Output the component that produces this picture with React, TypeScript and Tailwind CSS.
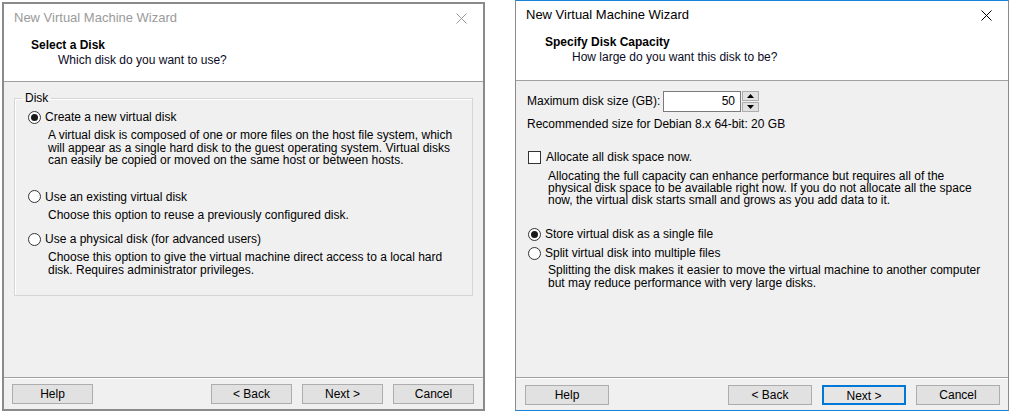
import type { ReactNode } from 'react';

const font = { fontFamily: '"Liberation Sans", Arial, sans-serif' };

function Radio({ checked }: { checked?: boolean }) {
  return (
    <span className="flex h-[13px] w-[13px] shrink-0 items-center justify-center rounded-full border border-[#333333] bg-white">
      {checked && <span className="h-[7px] w-[7px] rounded-full bg-[#1a1a1a]" />}
    </span>
  );
}

function Button({ label, focused, wide }: { label: string; focused?: boolean; wide?: boolean }) {
  if (focused)
    return (
      <button className="h-[20px] w-[84px] border-2 border-[#0078d7] bg-[#e5e5e5] text-[12px] text-black">{label}</button>
    );
  return (
    <button
      className={
        wide
          ? 'h-[20px] w-[84px] border border-[#adadad] bg-[#e1e1e1] text-[12px] text-black'
          : 'h-[20px] w-[81px] border border-[#adadad] bg-[#e1e1e1] text-[12px] text-black'
      }
    >
      {label}
    </button>
  );
}

function Wizard({
  active,
  heading,
  sub,
  children,
}: {
  active?: boolean;
  heading: string;
  sub: string;
  children: ReactNode;
}) {
  return (
    <div
      className={
        active
          ? 'flex h-[411px] w-[494px] flex-col border-x border-y border-x-[#8a8a8a] border-y-[#1883d7] bg-[#f0f0f0]'
          : 'mt-[2px] flex h-[409px] w-[483px] flex-col border-2 border-[#8a8a8a] bg-[#f0f0f0]'
      }
    >
      <div className="border-b border-[#a0a0a0] bg-white">
        <div className="flex h-[28px] items-center justify-between pl-[10px] pr-[16px]">
          <span className={active ? 'text-[13px] text-black' : 'text-[13px] text-[#9a9a9a]'}>
            New Virtual Machine Wizard
          </span>
          <svg width="11" height="11" viewBox="0 0 11 11" className={active ? 'text-black' : 'text-[#9a9a9a]'}>
            <path d="M0.5 0.5 L10.5 10.5 M10.5 0.5 L0.5 10.5" stroke="currentColor" strokeWidth="1" />
          </svg>
        </div>
        <div className={active ? 'h-[51px] pl-[29px] pt-[6px]' : 'h-[49px] pl-[27px] pt-[6px]'}>
          <div className="text-[12px] font-bold leading-[14px] text-black">{heading}</div>
          <div className="mt-[1px] pl-[27px] text-[12px] leading-[14px] text-[#0a0a23]">{sub}</div>
        </div>
      </div>
      <div className="flex-1 pt-[9px] text-[12px] text-black">{children}</div>
      <div
        className={
          active
            ? 'flex h-[33px] items-start gap-[10px] border-t border-[#a0a0a0] pl-[9px] pr-[8px] pt-[7px] shadow-[inset_0_1px_0_#ffffff]'
            : 'flex h-[32px] items-start gap-[10px] border-t border-[#a0a0a0] pl-[8px] pr-[9px] pt-[6px] shadow-[inset_0_1px_0_#ffffff]'
        }
      >
        <Button label="Help" wide={active} />
        <div className="flex-1" />
        <Button label="< Back" wide={active} />
        <Button label="Next >" focused={active} />
        <Button label="Cancel" wide={active} />
      </div>
    </div>
  );
}

function SelectDisk() {
  return (
    <fieldset className="ml-[10px] h-[205px] w-[459px] border border-[#d5d5d5] p-0 shadow-[inset_1px_1px_0_#ffffff]">
      <legend className="ml-[7px] px-[3px] leading-[14px]">Disk</legend>
      <div className="mt-[4px] flex h-[16px] items-center gap-[4px] pl-[13px]">
        <Radio checked />
        <span>Create a new virtual disk</span>
      </div>
      <p className="mt-[4px] pl-[33px] leading-[12.5px]">
        A virtual disk is composed of one or more files on the host file system, which
        <br />
        will appear as a single hard disk to the guest operating system. Virtual disks
        <br />
        can easily be copied or moved on the same host or between hosts.
      </p>
      <div className="mt-[22px] flex h-[16px] items-center gap-[4px] pl-[13px]">
        <Radio />
        <span>Use an existing virtual disk</span>
      </div>
      <p className="mt-[4px] pl-[33px] leading-[12.5px]">Choose this option to reuse a previously configured disk.</p>
      <div className="mt-[10px] flex h-[16px] items-center gap-[4px] pl-[13px]">
        <Radio />
        <span>Use a physical disk (for advanced users)</span>
      </div>
      <p className="mt-[4px] pl-[33px] leading-[12.5px]">
        Choose this option to give the virtual machine direct access to a local hard
        <br />
        disk. Requires administrator privileges.
      </p>
    </fieldset>
  );
}

function DiskCapacity() {
  return (
    <div className="pl-[11px]">
      <div className="flex h-[22px] items-center">
        <span className="w-[136px]">Maximum disk size (GB):</span>
        <div className="flex h-[21px] items-stretch">
          <div className="flex w-[78px] items-center justify-end border border-[#7a7a7a] bg-white pr-[5px]">50</div>
          <div className="ml-[1px] flex w-[17px] flex-col gap-[1px]">
            <div className="flex flex-1 items-center justify-center border border-[#adadad] bg-[#e1e1e1]">
              <svg width="7" height="4" viewBox="0 0 7 4">
                <path d="M0 4 L3.5 0 L7 4 Z" fill="#000" />
              </svg>
            </div>
            <div className="flex flex-1 items-center justify-center border border-[#adadad] bg-[#e1e1e1]">
              <svg width="7" height="4" viewBox="0 0 7 4">
                <path d="M0 0 L3.5 4 L7 0 Z" fill="#000" />
              </svg>
            </div>
          </div>
        </div>
      </div>
      <div className="mt-[5px] leading-[14px]">Recommended size for Debian 8.x 64-bit: 20 GB</div>
      <div className="mt-[18px] flex h-[16px] items-center gap-[5px] pl-[1px]">
        <span className="h-[13px] w-[13px] shrink-0 border border-[#333333] bg-white" />
        <span>Allocate all disk space now.</span>
      </div>
      <p className="mt-[5px] pl-[21px] leading-[12px]">
        Allocating the full capacity can enhance performance but requires all of the
        <br />
        physical disk space to be available right now. If you do not allocate all the space
        <br />
        now, the virtual disk starts small and grows as you add data to it.
      </p>
      <div className="mt-[20px] flex h-[16px] items-center gap-[4px] pl-[1px]">
        <Radio checked />
        <span>Store virtual disk as a single file</span>
      </div>
      <div className="mt-[3px] flex h-[16px] items-center gap-[4px] pl-[1px]">
        <Radio />
        <span>Split virtual disk into multiple files</span>
      </div>
      <p className="mt-[3px] pl-[21px] leading-[13px]">
        Splitting the disk makes it easier to move the virtual machine to another computer
        <br />
        but may reduce performance with very large disks.
      </p>
    </div>
  );
}

export default function App() {
  return (
    <div className="flex h-[415px] w-[1011px] items-start bg-white" style={font}>
      <div className="ml-[2px]">
        <Wizard heading="Select a Disk" sub="Which disk do you want to use?">
          <SelectDisk />
        </Wizard>
      </div>
      <div className="ml-[30px]">
        <Wizard active heading="Specify Disk Capacity" sub="How large do you want this disk to be?">
          <DiskCapacity />
        </Wizard>
      </div>
    </div>
  );
}
